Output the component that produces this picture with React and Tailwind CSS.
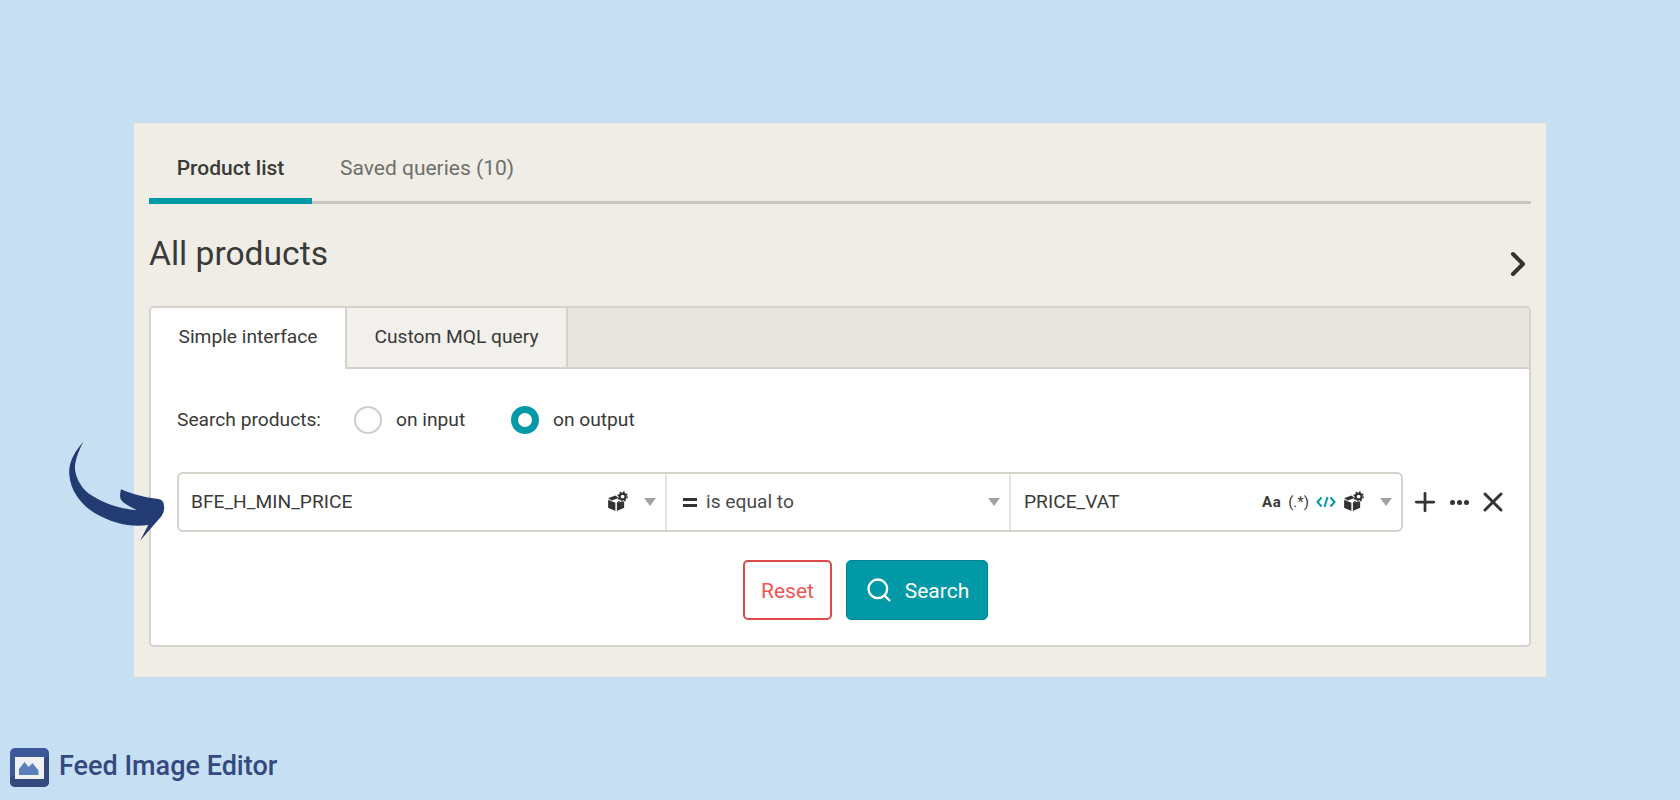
import React from 'react'
import { ChevronRight, Plus, X, Search } from 'lucide-react'

function BoxCog({ className }) {
  return (
    <svg viewBox="0 0 20 20" className={className} fill="#333331">
      <path d="M1 6.5 7.6 4l3 2.3-6.3 2.4z" />
      <path d="M1 8v7.2l6.6 3V10.600z" />
      <path d="M9 10.600v7.600l6.600-3v-5.800l-3.300.9-1.300-1.500z" />
      <circle cx="14.200" cy="5" r="2.700" fill="none" stroke="#333331" strokeWidth="2" />
      <circle cx="14.200" cy="5" r="4.100" fill="none" stroke="#333331" strokeWidth="1.300" strokeDasharray="1.600 1.600" />
    </svg>
  )
}

function CodeTag() {
  return (
    <svg viewBox="0 0 20 12" className="ml-[7px] w-[20px] h-[12px]" fill="none" stroke="#0299a6" strokeWidth="2">
      <path d="M5.500 1.500 1.500 6l4 4.500" />
      <path d="M14.500 1.500l4 4.500-4 4.500" />
      <path d="M11.500 1 8.500 11" />
    </svg>
  )
}

function Caret() {
  return <span className="w-0 h-0 border-x-[6px] border-x-transparent border-t-[8px] border-t-[#a3a3a1]" />
}

function Logo() {
  return (
    <svg viewBox="0 0 39 39" className="w-[39px] h-[39px]">
      <rect width="39" height="39" rx="5" fill="#3b5998" />
      <path d="M0 30 39 8v26a5 5 0 0 1-5 5H5a5 5 0 0 1-5-5z" fill="#34497f" />
      <rect x="5" y="9" width="29" height="22" fill="#eef0f3" />
      <path d="M9 27v-6l5.500-7 4 5 4-4 6 7.500V27z" fill="#5a7fba" />
    </svg>
  )
}

export default function App() {
  return (
    <div className="relative h-[800px] bg-[#c7dff2] pt-[123px] font-['Roboto',sans-serif] text-[#3a3a38] overflow-hidden">
      <div className="ml-[134px] w-[1412px] h-[554px] bg-[#f0ede6] px-[15px]">
        <div className="flex h-[81px] border-b-[3px] border-[#c9c6c0]">
          <div className="w-[163px] h-[81px] border-b-[6px] border-[#0299a6] flex items-center justify-center text-[21px] font-medium pt-[16px]">
            Product list
          </div>
          <div className="h-[78px] pl-[28px] pt-[13px] flex items-center text-[21px] text-[#6f6f6c]">Saved queries (10)</div>
        </div>

        <div className="flex items-center justify-between h-[102px] pb-[3px]">
          <h1 className="text-[33.600px] leading-none">All products</h1>
          <ChevronRight className="w-[40px] h-[40px] mr-[-7px] mt-[20px] text-[#333331]" strokeWidth={2.4} />
        </div>

        <div className="w-[1382px] h-[341px] bg-white border-2 border-[#d5d2cb] rounded-[5px] overflow-hidden">
          <div className="flex h-[61px] bg-[#e8e5de] border-b-2 border-[#d5d2cb]">
            <div className="w-[196px] h-[61px] bg-white border-r-2 border-[#d5d2cb] flex items-center justify-center text-[19.200px] pb-[2px]">
              Simple interface
            </div>
            <div className="w-[221px] bg-[#f2f0ec] border-r-2 border-[#d5d2cb] flex items-center justify-center text-[19.200px]">
              Custom MQL query
            </div>
          </div>

          <div className="flex items-center h-[100px] pl-[26px] text-[19.200px] pt-[2px]">
            <span className="w-[177px]">Search products:</span>
            <span className="w-[28px] h-[28px] rounded-full border-2 border-[#cfccc6] bg-white" />
            <span className="ml-[14px] w-[68px] whitespace-nowrap">on input</span>
            <span className="ml-[47px] w-[28px] h-[28px] rounded-full border-[7px] border-[#0299a6] bg-white" />
            <span className="ml-[14px]">on output</span>
          </div>

          <div className="flex items-center pl-[26px] mt-[3px]">
            <div className="flex w-[1226px] h-[60px] border-2 border-[#d5d2cb] rounded-[6px] text-[19.200px]">
              <div className="w-[488px] flex items-center pl-[12px] pr-[9px] border-r-2 border-[#e6e4e0]">
                <span className="flex-1 pt-[1px]">BFE_H_MIN_PRICE</span>
                <BoxCog className="w-[22px] h-[22px]" />
                <span className="ml-[15px] flex"><Caret /></span>
              </div>
              <div className="w-[344px] flex items-center pl-[16px] pr-[9px] border-r-2 border-[#e6e4e0]">
                <span className="flex flex-col gap-[3px] w-[14px]">
                  <span className="h-[3px] bg-[#333331]" />
                  <span className="h-[3px] bg-[#333331]" />
                </span>
                <span className="flex-1 ml-[9px] pt-[1px] text-[#4a4a48]">is equal to</span>
                <Caret />
              </div>
              <div className="flex-1 flex items-center pl-[13px] pr-[9px]">
                <span className="flex-1 pt-[1px]">PRICE_VAT</span>
                <span className="text-[15px] font-bold tracking-[0.5px]">Aa</span>
                <span className="ml-[7px] text-[15px]">(.*)</span>
                <CodeTag />
                <BoxCog className="ml-[7px] w-[22px] h-[22px]" />
                <span className="ml-[15px] flex"><Caret /></span>
              </div>
            </div>
            <Plus className="ml-[7px] w-[30px] h-[30px] text-[#333331]" strokeWidth={2.2} />
            <span className="ml-[10px] flex gap-[2px]">
              <span className="w-[5px] h-[5px] rounded-full bg-[#333331]" />
              <span className="w-[5px] h-[5px] rounded-full bg-[#333331]" />
              <span className="w-[5px] h-[5px] rounded-full bg-[#333331]" />
            </span>
            <X className="ml-[8px] w-[32px] h-[32px] text-[#333331]" strokeWidth={2.2} />
          </div>

          <div className="flex justify-center gap-[14px] mt-[28px] pl-[51px]">
            <button className="w-[89px] h-[60px] pt-[3px] border-2 border-[#dc4a4a] rounded-[5px] text-[#f05555] text-[21px]">Reset</button>
            <button className="w-[142px] h-[60px] bg-[#0299a6] border border-[#028592] rounded-[5px] text-white text-[21px] flex items-center justify-center gap-[12px]">
              <Search className="w-[28px] h-[28px]" strokeWidth={2} />
              <span className="pt-[3px]">Search</span>
            </button>
          </div>
        </div>
      </div>

      <div className="flex items-center ml-[10px] mt-[71px] gap-[10px]">
        <Logo />
        <span className="text-[27px] font-medium text-[#33497f] leading-none pb-[2px]">Feed Image Editor</span>
      </div>

      {/* arrow sits over the panel edge */}
      <svg viewBox="0 0 900 390" className="absolute left-[50px] top-[430px] w-[300px] h-[130px]">
        <path
          d="M100 35C70 70 55 100 58 135C62 185 95 225 135 250C185 280 245 293 295 285L270 332L335 258Q345 240 342 228Q342 210 325 207C285 203 245 192 213 178Q208 195 212 208Q220 222 260 240C205 238 150 215 115 190C85 165 70 125 76 100C80 75 90 55 100 35Z"
          fill="#233b73"
        />
      </svg>
    </div>
  )
}
